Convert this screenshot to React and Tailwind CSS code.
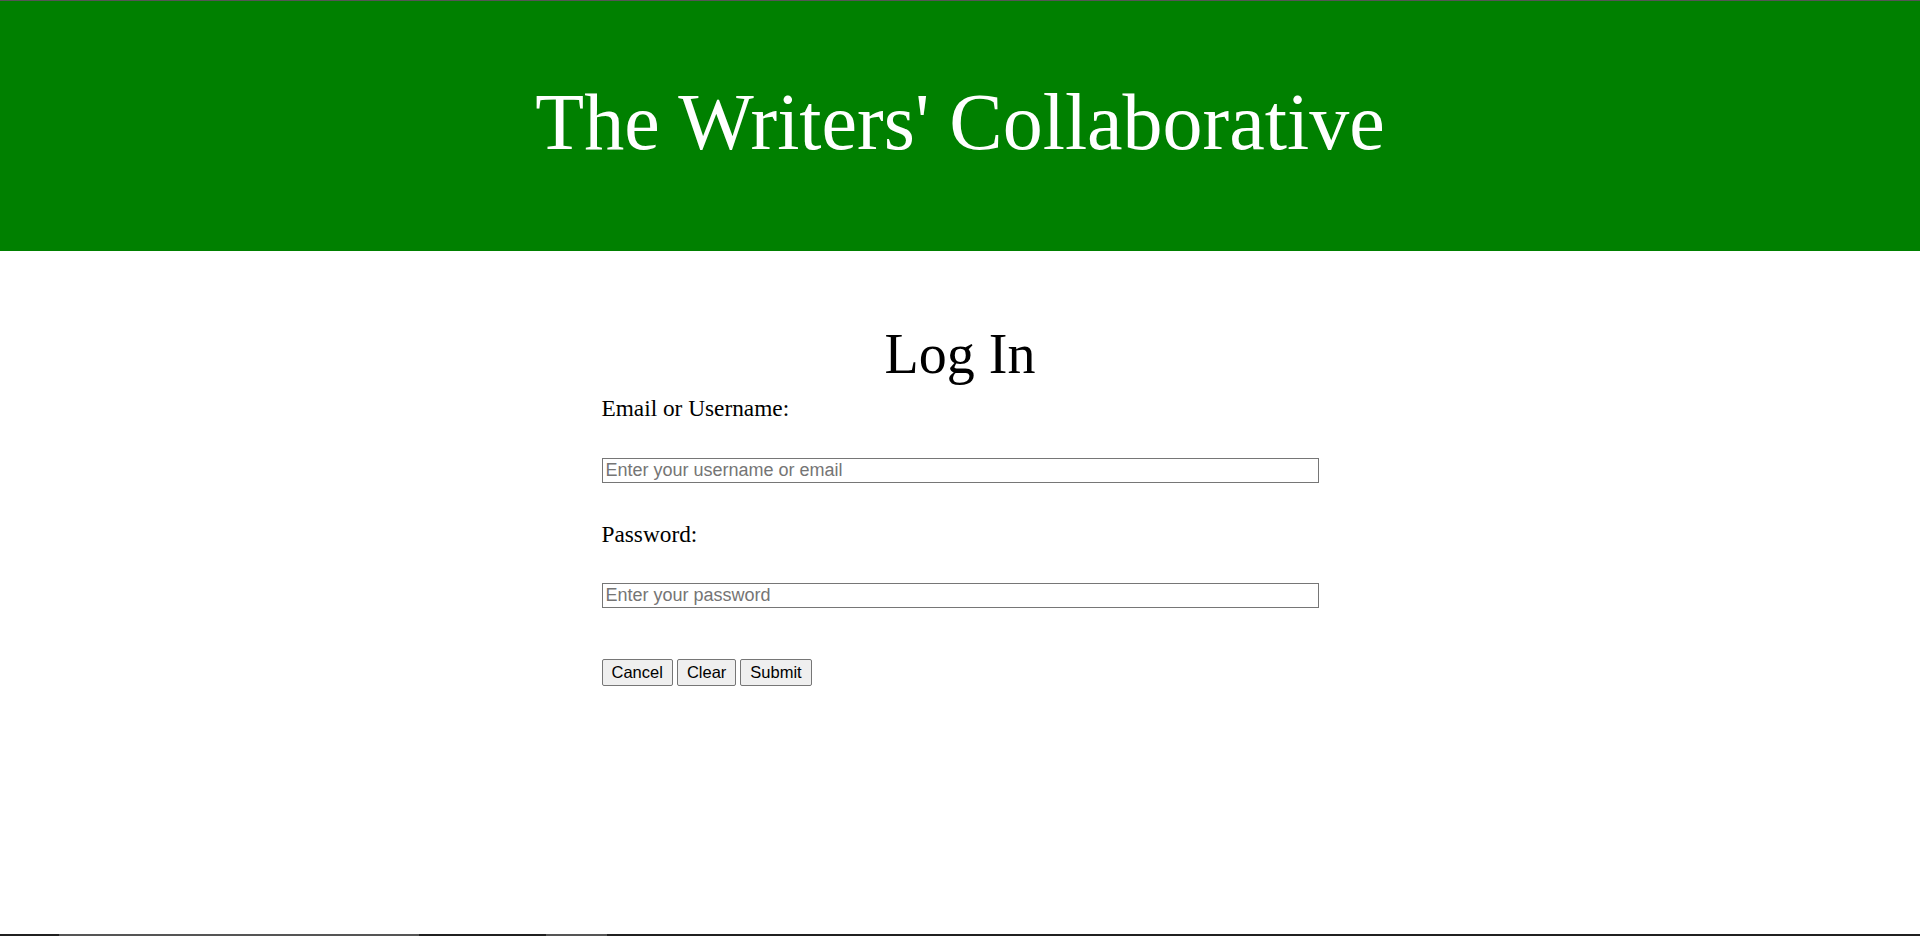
export default function App() {
  return (
    <div className="min-h-[936px] flex flex-col bg-white text-black font-['Liberation_Serif','Times_New_Roman',serif]">
      {/* header banner */}
      <header className="h-[251px] border-t border-[#555555] bg-[#008000] pt-[75px]">
        <h1 className="text-center text-[80px] leading-[92px] text-white">The Writers' Collaborative</h1>
      </header>

      <main className="flex-1">
        <form className="w-[717px] mx-auto flex flex-col items-start" onSubmit={(e) => e.preventDefault()}>
          <h2 className="self-stretch mt-[71px] text-center text-[56px] leading-[64px]">Log In</h2>

          <label htmlFor="user" className="mt-[9px] text-[23.3px] leading-[26px]">Email or Username:</label>
          <input
            id="user"
            type="text"
            placeholder="Enter your username or email"
            className="mt-[37px] w-full h-[25px] px-[3px] py-[1px] border border-[#767676] font-['Liberation_Sans',Arial,sans-serif] text-[18px] leading-[21px] placeholder:text-[#757575] outline-none"
          />

          <label htmlFor="pass" className="mt-[38px] text-[23.3px] leading-[26px]">Password:</label>
          <input
            id="pass"
            type="password"
            placeholder="Enter your password"
            className="mt-[36px] w-full h-[25px] px-[3px] py-[1px] border border-[#767676] font-['Liberation_Sans',Arial,sans-serif] text-[18px] leading-[21px] placeholder:text-[#757575] outline-none"
          />

          <div className="mt-[51px] flex gap-[4px]">
            {['Cancel', 'Clear', 'Submit'].map((label) => (
              <button
                key={label}
                type={label === 'Submit' ? 'submit' : label === 'Clear' ? 'reset' : 'button'}
                className="h-[27px] px-[9px] border border-[#767676] rounded-[2px] bg-[#efefef] font-['Liberation_Sans',Arial,sans-serif] text-[16.5px] leading-[19px] text-black"
              >
                {label}
              </button>
            ))}
          </div>
        </form>
      </main>

      {/* bottom edge strip */}
      <div className="h-[2px] flex bg-[#202020]">
        <div className="ml-[59px] w-[360px] bg-[#555555]" />
        <div className="ml-[127px] w-[61px] bg-[#555555]" />
      </div>
    </div>
  );
}
